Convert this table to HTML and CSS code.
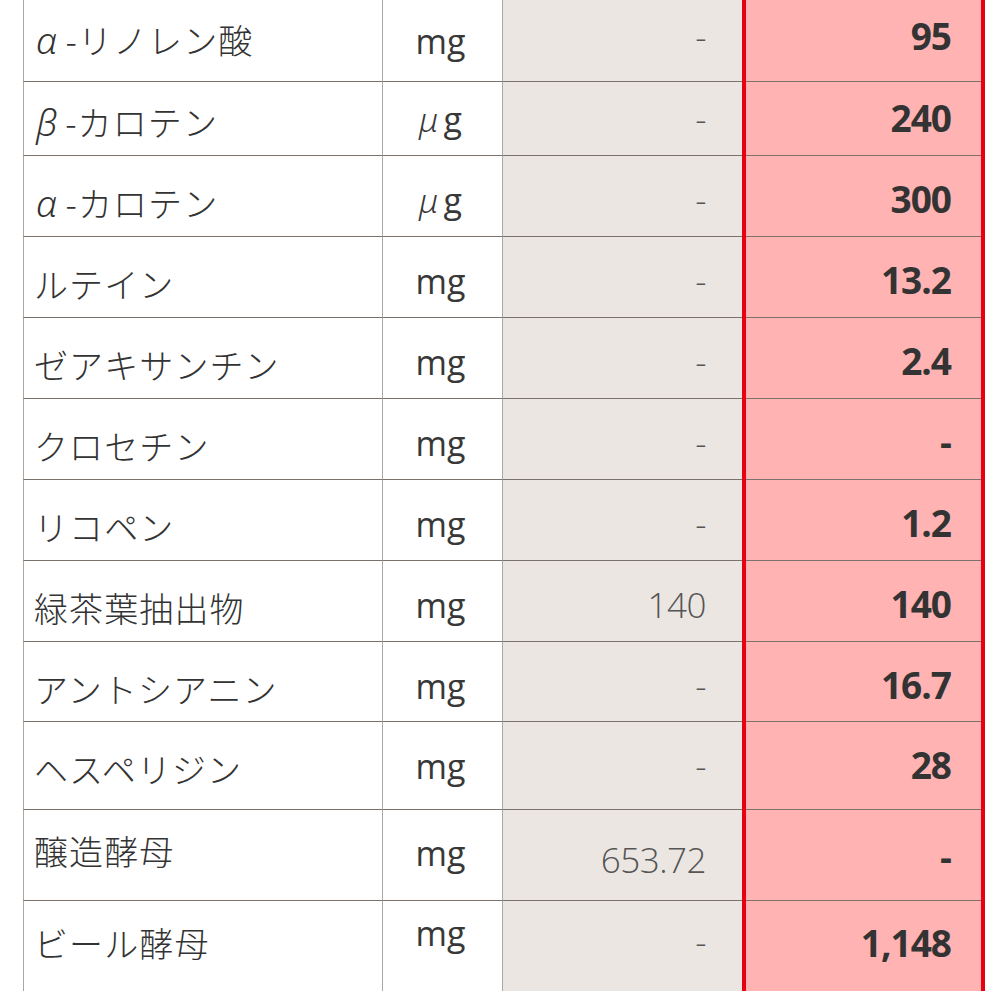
FILE: index.html
```html
<!DOCTYPE html>
<html lang="ja">
<head>
<meta charset="utf-8">
<title>成分表</title>
<link rel="stylesheet" href="styles.css">
</head>
<body>
<div class="table">
  <div class="row row--first">
    <div class="c name"><span class="greek">α</span>-リノレン酸</div>
    <div class="c unit">mg</div>
    <div class="c ref">-</div>
    <div class="c val">95</div>
  </div>
  <div class="row row--short">
    <div class="c name"><span class="greek">β</span>-カロテン</div>
    <div class="c unit"><span class="greek">μ</span>g</div>
    <div class="c ref">-</div>
    <div class="c val">240</div>
  </div>
  <div class="row">
    <div class="c name"><span class="greek">α</span>-カロテン</div>
    <div class="c unit"><span class="greek">μ</span>g</div>
    <div class="c ref">-</div>
    <div class="c val">300</div>
  </div>
  <div class="row">
    <div class="c name">ルテイン</div>
    <div class="c unit">mg</div>
    <div class="c ref">-</div>
    <div class="c val">13.2</div>
  </div>
  <div class="row">
    <div class="c name">ゼアキサンチン</div>
    <div class="c unit">mg</div>
    <div class="c ref">-</div>
    <div class="c val">2.4</div>
  </div>
  <div class="row">
    <div class="c name">クロセチン</div>
    <div class="c unit">mg</div>
    <div class="c ref">-</div>
    <div class="c val">-</div>
  </div>
  <div class="row">
    <div class="c name">リコペン</div>
    <div class="c unit">mg</div>
    <div class="c ref">-</div>
    <div class="c val">1.2</div>
  </div>
  <div class="row">
    <div class="c name">緑茶葉抽出物</div>
    <div class="c unit">mg</div>
    <div class="c ref">140</div>
    <div class="c val">140</div>
  </div>
  <div class="row row--h80">
    <div class="c name">アントシアニン</div>
    <div class="c unit">mg</div>
    <div class="c ref">-</div>
    <div class="c val">16.7</div>
  </div>
  <div class="row row--h88">
    <div class="c name">ヘスペリジン</div>
    <div class="c unit">mg</div>
    <div class="c ref">-</div>
    <div class="c val">28</div>
  </div>
  <div class="row row--brew">
    <div class="c name">醸造酵母</div>
    <div class="c unit">mg</div>
    <div class="c ref">653.72</div>
    <div class="c val">-</div>
  </div>
  <div class="row row--beer">
    <div class="c name">ビール酵母</div>
    <div class="c unit">mg</div>
    <div class="c ref">-</div>
    <div class="c val">1,148</div>
  </div>
</div>
</body>
</html>
```

FILE: styles.css
```css
html, body {
  margin: 0;
  padding: 0;
  background: #ffffff;
}

.table {
  margin-left: 23px;
  width: 963px;
}

.row {
  display: grid;
  grid-template-columns: 360px 120px 239px 243px;
  height: 81px;
  --shift: 0px;
}

.row--first { height: 82px; --shift: -7px; }
.row--short { height: 74px; --shift: -7px; }
.row--h80 { height: 80px; }
.row--h88 { height: 88px; }
.row--brew { height: 91px; }
.row--beer { height: 91px; }

.c {
  box-sizing: border-box;
  line-height: 1;
  white-space: nowrap;
  padding-top: calc(var(--pt) + var(--shift));
}

.name,
.unit,
.ref {
  border-bottom: 1px solid #78716c;
}

.name {
  --pt: 30px;
  border-left: 1px solid #aca6a1;
  border-right: 1px solid #aca6a1;
  padding-left: 10px;
  font-family: "Noto Sans CJK JP", sans-serif;
  font-weight: 300;
  font-size: 34px;
  letter-spacing: 1.1px;
  color: #333333;
}

.greek {
  font-family: "Noto Sans", "DejaVu Sans", sans-serif;
  font-style: italic;
  font-weight: 300;
  line-height: 0;
}

.name .greek {
  font-size: 37px;
  margin-left: 2px;
  margin-right: 7px;
}

.unit {
  --pt: 27px;
  border-right: 1px solid #aca6a1;
  text-align: center;
  font-family: "Open Sans", "Noto Sans", sans-serif;
  font-size: 34px;
  color: #383838;
  padding-right: 4px;
}

.unit .greek {
  font-size: 33px;
  margin-right: 5px;
}

.ref {
  --pt: 26px;
  background: #ebe6e2;
  text-align: right;
  padding-right: 36px;
  font-family: "Open Sans", "Noto Sans", sans-serif;
  font-weight: 300;
  font-size: 35px;
  letter-spacing: -0.5px;
  color: #555555;
}

.val {
  --pt: 24px;
  background: linear-gradient(#78716c, #78716c) bottom / 100% 1px no-repeat, #ffb3b3;
  border-left: 4px solid #e60012;
  border-right: 4px solid #e60012;
  text-align: right;
  padding-right: 30px;
  font-family: "Open Sans", "Noto Sans", sans-serif;
  font-weight: 700;
  font-size: 37px;
  letter-spacing: -1px;
  color: #333333;
}

.row--first .unit { --shift: -3px; }

.row--brew .name { --shift: -6px; }
.row--brew .unit { --shift: -1px; }
.row--brew .ref { --shift: 6px; }
.row--brew .val { --shift: 4px; }

.row--beer .name { --shift: -5px; }
.row--beer .unit { --shift: -12px; }
.row--beer .ref { --shift: -3px; }
.row--beer .val { --shift: -1px; }
```
